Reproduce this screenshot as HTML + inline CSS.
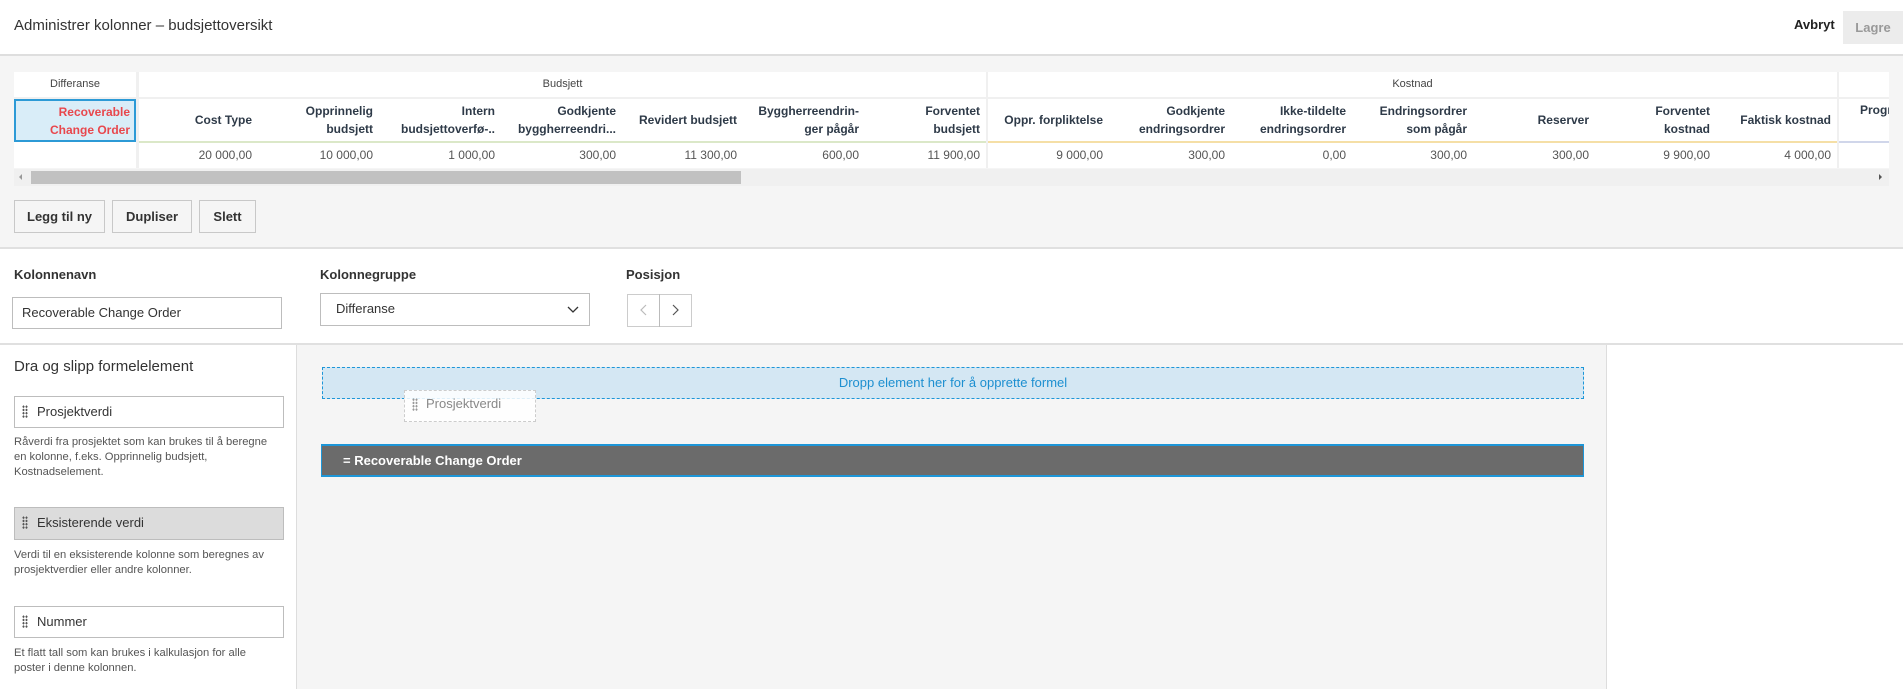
<!DOCTYPE html>
<html><head><meta charset="utf-8"><style>
*{box-sizing:border-box;margin:0;padding:0}
body{width:1903px;height:689px;overflow:hidden;background:#f5f5f5;font-family:"Liberation Sans",sans-serif;color:#3c3c3c;position:relative}
.a{position:absolute}
.hdr{left:0;top:0;width:1903px;height:56px;background:#fff;border-bottom:2px solid #dedede}
.th{font-size:12px;font-weight:bold;color:#2e3a48;text-align:right;padding-right:8px;line-height:18px;display:flex;align-items:center;justify-content:flex-end}
.td{font-size:12px;color:#555;text-align:right;padding-right:8px;line-height:26px}
.btn{background:#f5f5f5;border:1px solid #c8c8c8;font-size:13px;font-weight:bold;color:#333;text-align:center;line-height:31px}
.lbl{font-size:13px;font-weight:bold;color:#333}
.inp{background:#fff;border:1px solid #bdbdbd;font-size:13px;color:#333;padding-left:9px}
.el{background:#fff;border:1px solid #bdbdbd;font-size:13px;color:#333;padding-left:22px;line-height:29px}
.dots{position:absolute;left:7px;top:8px;width:6px;height:13px;background-image:radial-gradient(circle,#555 1px,transparent 1.2px);background-size:3px 3.3px}
.desc{font-size:11.2px;color:#555;line-height:15px;width:264px}
</style></head><body>
<div class="a hdr"></div>
<div class="a" style="left:14px;top:17px;font-size:15px;color:#333">Administrer kolonner – budsjettoversikt</div>
<div class="a" style="left:1794px;top:17px;font-size:13px;font-weight:bold;color:#222">Avbryt</div>
<div class="a" style="left:1843px;top:11px;width:60px;height:33px;background:#ececec;color:#999;font-size:13px;font-weight:bold;line-height:33px;text-align:center">Lagre</div>

<div class="a" style="left:14px;top:72px;width:1875px;height:96px;background:#fff"></div>
<div class="a" style="left:136px;top:72px;width:3px;height:96px;background:#f0f0f0"></div>
<div class="a" style="left:986px;top:72px;width:2px;height:96px;background:#f0f0f0"></div>
<div class="a" style="left:1837px;top:72px;width:2px;height:96px;background:#f0f0f0"></div>
<div class="a" style="left:14px;top:97px;width:1875px;height:2px;background:#f0f0f0"></div>
<div class="a" style="left:14px;top:78px;width:122px;text-align:center;font-size:11px;color:#444">Differanse</div>
<div class="a" style="left:139px;top:78px;width:847px;text-align:center;font-size:11px;color:#444">Budsjett</div>
<div class="a" style="left:988px;top:78px;width:849px;text-align:center;font-size:11px;color:#444">Kostnad</div>
<div class="a" style="left:14px;top:99px;width:122px;height:43px;background:#d9edf8;border:2px solid #2c9ad6;color:#e8474d;font-size:12px;font-weight:bold;text-align:right;padding-right:4px;line-height:18px;padding-top:2px">Recoverable<br>Change Order</div>
<div class="a" style="left:139px;top:141px;width:847px;height:2px;background:#dbe8c8"></div>
<div class="a" style="left:988px;top:141px;width:849px;height:2px;background:#f5dfa6"></div>
<div class="a" style="left:1839px;top:141px;width:50px;height:2px;background:#d0d6ea"></div>

<div class="a" style="left:139px;top:99px;display:flex">
<div class="th" style="width:121px;height:42px">Cost Type</div>
<div class="th" style="width:121px;height:42px">Opprinnelig<br>budsjett</div>
<div class="th" style="width:122px;height:42px">Intern<br>budsjettoverfø-..</div>
<div class="th" style="width:121px;height:42px">Godkjente<br>byggherreendri...</div>
<div class="th" style="width:121px;height:42px">Revidert budsjett</div>
<div class="th" style="width:122px;height:42px">Byggherreendrin-<br>ger pågår</div>
<div class="th" style="width:121px;height:42px">Forventet<br>budsjett</div>
<div class="th" style="width:2px;height:42px;padding:0"></div>
<div class="th" style="width:121px;height:42px">Oppr. forpliktelse</div>
<div class="th" style="width:122px;height:42px">Godkjente<br>endringsordrer</div>
<div class="th" style="width:121px;height:42px">Ikke-tildelte<br>endringsordrer</div>
<div class="th" style="width:121px;height:42px">Endringsordrer<br>som pågår</div>
<div class="th" style="width:122px;height:42px">Reserver</div>
<div class="th" style="width:121px;height:42px">Forventet<br>kostnad</div>
<div class="th" style="width:121px;height:42px">Faktisk kostnad</div>
</div>
<div class="a" style="left:1860px;top:103px;font-size:12px;font-weight:bold;color:#2e3a48;width:29px;overflow:hidden;white-space:nowrap">Prognose</div>

<div class="a" style="left:139px;top:142px;display:flex">
<div class="td" style="width:121px">20 000,00</div>
<div class="td" style="width:121px">10 000,00</div>
<div class="td" style="width:122px">1 000,00</div>
<div class="td" style="width:121px">300,00</div>
<div class="td" style="width:121px">11 300,00</div>
<div class="td" style="width:122px">600,00</div>
<div class="td" style="width:121px">11 900,00</div>
<div class="td" style="width:2px;padding:0"></div>
<div class="td" style="width:121px">9 000,00</div>
<div class="td" style="width:122px">300,00</div>
<div class="td" style="width:121px">0,00</div>
<div class="td" style="width:121px">300,00</div>
<div class="td" style="width:122px">300,00</div>
<div class="td" style="width:121px">9 900,00</div>
<div class="td" style="width:121px">4 000,00</div>
</div>
<div class="a" style="left:14px;top:169px;width:1875px;height:17px;background:#f0f0f0"></div>
<div class="a" style="left:31px;top:171px;width:710px;height:13px;background:#c1c1c1"></div>
<div class="a" style="left:19px;top:174px;width:0;height:0;border-top:3px solid transparent;border-bottom:3px solid transparent;border-right:3px solid #999"></div>
<div class="a" style="left:1879px;top:174px;width:0;height:0;border-top:3px solid transparent;border-bottom:3px solid transparent;border-left:3px solid #555"></div>

<div class="a btn" style="left:14px;top:200px;width:91px;height:33px">Legg til ny</div>
<div class="a btn" style="left:112px;top:200px;width:80px;height:33px">Dupliser</div>
<div class="a btn" style="left:199px;top:200px;width:57px;height:33px">Slett</div>

<div class="a" style="left:0;top:247px;width:1903px;height:98px;background:#fff;border-top:2px solid #e0e0e0;border-bottom:2px solid #e0e0e0"></div>
<div class="a lbl" style="left:14px;top:267px">Kolonnenavn</div>
<div class="a lbl" style="left:320px;top:267px">Kolonnegruppe</div>
<div class="a lbl" style="left:626px;top:267px">Posisjon</div>
<div class="a inp" style="left:12px;top:297px;width:270px;height:32px;line-height:30px">Recoverable Change Order</div>
<div class="a inp" style="left:320px;top:293px;width:270px;height:33px;line-height:29px;padding-left:15px">Differanse</div>
<svg class="a" style="left:567px;top:304px" width="12" height="10"><path d="M1 3 L6 8 L11 3" stroke="#333" stroke-width="1.3" fill="none"/></svg>
<div class="a" style="left:627px;top:294px;width:65px;height:33px;border:1px solid #ccc;background:#fff"></div>
<div class="a" style="left:659px;top:294px;width:1px;height:33px;background:#bbb"></div>
<svg class="a" style="left:638px;top:303px" width="12" height="14"><path d="M8 2 L3 7 L8 12" stroke="#bbb" stroke-width="1.2" fill="none"/></svg>
<svg class="a" style="left:669px;top:303px" width="12" height="14"><path d="M4 2 L9 7 L4 12" stroke="#555" stroke-width="1.2" fill="none"/></svg>

<div class="a" style="left:0;top:345px;width:297px;height:344px;background:#fff;border-right:1px solid #ddd"></div>
<div class="a" style="left:1606px;top:345px;width:297px;height:344px;background:#fff;border-left:1px solid #ddd"></div>
<div class="a" style="left:14px;top:358px;font-size:15px;color:#333">Dra og slipp formelelement</div>
<div class="a el" style="left:14px;top:396px;width:270px;height:32px"><span class="dots"></span>Prosjektverdi</div>
<div class="a desc" style="left:14px;top:435px">Råverdi fra prosjektet som kan brukes til å beregne en kolonne, f.eks. Opprinnelig budsjett, Kostnadselement.</div>
<div class="a el" style="left:14px;top:507px;width:270px;height:33px;background:#dcdcdc"><span class="dots"></span>Eksisterende verdi</div>
<div class="a desc" style="left:14px;top:548px">Verdi til en eksisterende kolonne som beregnes av prosjektverdier eller andre kolonner.</div>
<div class="a el" style="left:14px;top:606px;width:270px;height:32px"><span class="dots"></span>Nummer</div>
<div class="a desc" style="left:14px;top:646px">Et flatt tall som kan brukes i kalkulasjon for alle poster i denne kolonnen.</div>

<div class="a" style="left:322px;top:367px;width:1262px;height:32px;background:#d4e7f3;border:1px dashed #1d96d8;color:#1d8fd0;font-size:13px;text-align:center;line-height:30px">Dropp element her for å opprette formel</div>
<div class="a" style="left:404px;top:390px;width:132px;height:32px;background:rgba(255,255,255,.85);border:1px dashed #ccc;font-size:13px;color:#888;padding-left:21px;line-height:26px"><span class="dots" style="opacity:.6;top:7px"></span>Prosjektverdi</div>
<div class="a" style="left:321px;top:444px;width:1263px;height:33px;background:#6b6b6b;border:2px solid #1d96d8;border-left-width:1px;border-right-width:1px;color:#fff;font-size:13px;font-weight:bold;padding-left:21px;line-height:29px">= Recoverable Change Order</div>
</body></html>
